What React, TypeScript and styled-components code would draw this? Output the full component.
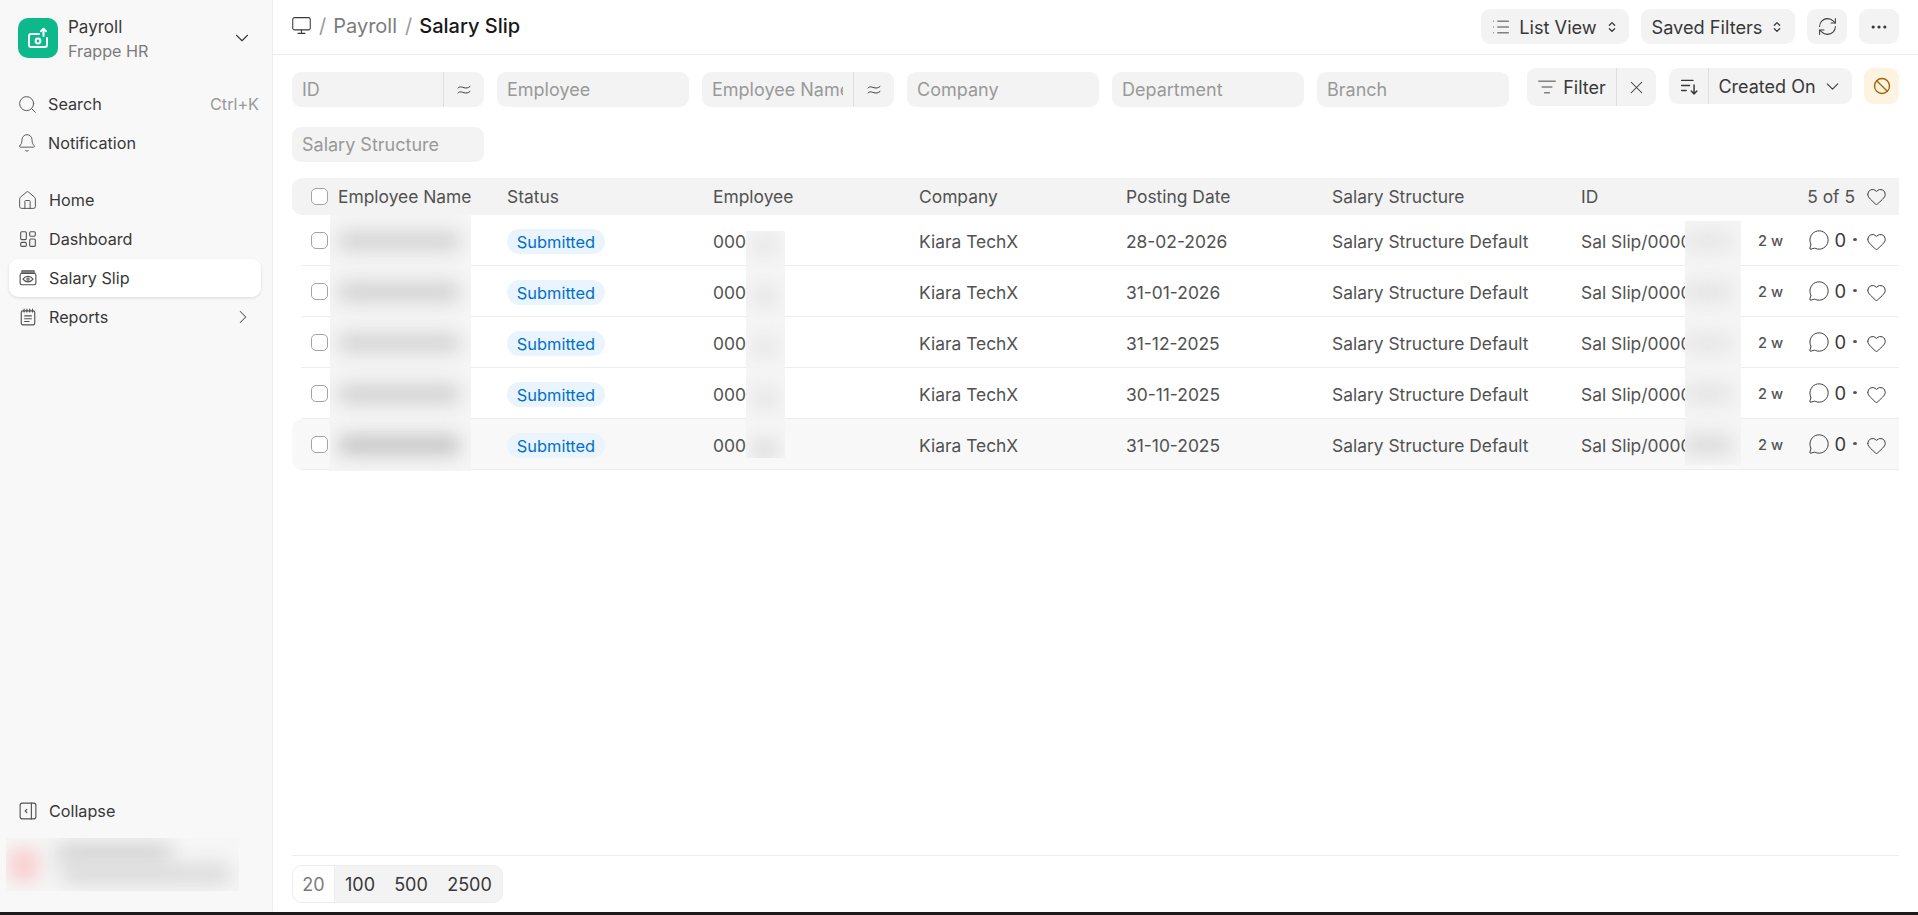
import React from 'react';
import styled, { createGlobalStyle } from 'styled-components';
import {
  Search, Bell, House, ChevronDown, ChevronRight, Monitor, List, RefreshCw,
  Ellipsis, ListFilter, X, Ban, MessageCircle, Heart,
} from 'lucide-react';

const GlobalStyle = createGlobalStyle`
  html, body { margin: 0; padding: 0; height: 100%; background: #fff; }
  body { font-family: "Inter", "Liberation Sans", sans-serif; font-size: 16px; color: #525252; overflow: hidden; }
  #root { height: 100%; }
`;

const Page = styled.div`
  height: 915px;
  display: flex;
  flex-direction: column;
`;
const Desk = styled.div`
  flex: 1;
  display: flex;
  min-height: 0;
`;
const BottomStrip = styled.div`
  height: 3px;
  background: #1e1a1b;
`;

/* sidebar */
const Sidebar = styled.aside`
  flex: none;
  box-sizing: border-box;
  background: #f8f8f8;
  border-right: 1px solid #ededed;
  width: 273px;
  display: flex;
  flex-direction: column;
  padding: 18px 11px 21px 9px;
`;
const Brand = styled.div`
  display: flex;
  align-items: center;
  padding-left: 9px;
  height: 40px;
`;
const Logo = styled.div`
  width: 40px;
  height: 40px;
  border-radius: 10px;
  background: #0db88b;
  display: flex;
  align-items: center;
  justify-content: center;
  flex: none;
`;
const BrandText = styled.div`
  flex: 1;
  margin-left: 10px;
  display: flex;
  flex-direction: column;
  gap: 4px;
  padding-top: 1px;
`;
const BrandTitle = styled.div`
  font-size: 17px;
  line-height: 20px;
  color: #383838;
`;
const BrandSub = styled.div`
  font-size: 16.2px;
  line-height: 20px;
  color: #7c7c7c;
`;
const BrandChevron = styled(ChevronDown)`
  margin-right: 8px;
  color: #383838;
`;
const NavGroup = styled.nav<{ $top: number }>`
  display: flex;
  flex-direction: column;
  gap: 1px;
  margin-top: ${(p) => p.$top}px;
`;
const NavItem = styled.div<{ $active?: boolean }>`
  height: 38px;
  box-sizing: border-box;
  display: flex;
  align-items: center;
  padding: 0 10px;
  border-radius: 9px;
  font-size: 16.2px;
  color: #383838;
  background: ${(p) => (p.$active ? '#fff' : 'transparent')};
  box-shadow: ${(p) => (p.$active ? '0 1px 3px rgba(0,0,0,0.12)' : 'none')};
`;
const IconSlot = styled.span<{ $w: number; $shift: number }>`
  flex: none;
  width: ${(p) => p.$w}px;
  display: flex;
  align-items: center;
  color: #525252;
  svg { margin-left: ${(p) => p.$shift}px; flex: none; }
`;
const NavLabel = styled.span`
  flex: 1;
`;
const Shortcut = styled.span`
  font-size: 16.2px;
  color: #999;
  margin-right: -8px;
`;
const SideChevron = styled(ChevronRight)`
  color: #525252;
  margin-right: -3px;
`;
const SideFoot = styled.div`
  margin-top: auto;
  display: flex;
  flex-direction: column;
  gap: 8px;
`;
const UserBlur = styled.div`
  height: 53px;
  margin: 0 22px 0 -3px;
  background: #f6f6f6;
  position: relative;
  overflow: hidden;
`;
const UserAvatar = styled.div`
  position: absolute;
  left: 2px;
  top: 10px;
  width: 32px;
  height: 34px;
  background: #f8d3d3;
  border-radius: 8px;
  filter: blur(8px);
`;
const UserLine = styled.div<{ $left: number; $top: number; $w: number; $tone: string }>`
  position: absolute;
  left: ${(p) => p.$left}px;
  top: ${(p) => p.$top}px;
  width: ${(p) => p.$w}px;
  height: 18px;
  border-radius: 6px;
  background: ${(p) => p.$tone};
  filter: blur(10px);
`;

/* main */
const Main = styled.main`
  flex: 1;
  min-width: 0;
  display: flex;
  flex-direction: column;
`;
const Topbar = styled.header`
  height: 55px;
  box-sizing: border-box;
  border-bottom: 1px solid #ededed;
  display: flex;
  align-items: flex-start;
  justify-content: space-between;
  padding: 9px 19px 0 19px;
`;
const Crumbs = styled.div`
  display: flex;
  align-items: center;
  height: 35px;
  margin-top: -1px;
  font-size: 20px;
  color: #7c7c7c;
  svg { color: #383838; margin: 0 7px 0 -1px; }
`;
const Sep = styled.span`
  color: #999;
  margin: 0 7px 0 0;
`;
const CrumbLink = styled.span`
  margin-right: 8px;
`;
const CrumbCurrent = styled.span`
  color: #171717;
  font-weight: 450;
`;
const Actions = styled.div`
  display: flex;
  gap: 12px;
`;
const Button = styled.button<{ $w: number }>`
  height: 35px;
  width: ${(p) => p.$w}px;
  box-sizing: border-box;
  border: none;
  border-radius: 9px;
  background: #f3f3f3;
  color: #383838;
  font: 400 18.2px "Inter", "Liberation Sans", sans-serif;
  display: flex;
  align-items: center;
  justify-content: center;
  gap: 8px;
  padding: 0;
`;

const Content = styled.div`
  flex: 1;
  display: flex;
  flex-direction: column;
  padding: 0 19px 9px 19px;
  min-height: 0;
`;
const FilterSection = styled.section`
  display: flex;
  align-items: flex-start;
  gap: 18px;
  padding-top: 13px;
  margin-bottom: 16px;
`;
const FilterFields = styled.div`
  display: grid;
  grid-template-columns: repeat(6, 192px);
  gap: 20px 13px;
  margin-top: 4px;
`;
const Field = styled.div`
  height: 35px;
  border-radius: 9px;
  background: #f3f3f3;
  display: flex;
  align-items: center;
  overflow: hidden;
  color: #999;
  font-size: 18px;
`;
const FieldLabel = styled.span`
  flex: 1;
  min-width: 0;
  margin: 0 10px;
  white-space: nowrap;
  overflow: hidden;
`;
const FieldFit = styled.span`
  flex: none;
  width: 41px;
  height: 100%;
  border-left: 1px solid #dedede;
  box-sizing: border-box;
  display: flex;
  align-items: center;
  justify-content: center;
  color: #383838;
`;
const FilterTools = styled.div`
  display: flex;
  gap: 13px;
`;
const SplitButton = styled.div<{ $h: number }>`
  height: ${(p) => p.$h}px;
  border-radius: 9px;
  background: #f3f3f3;
  display: flex;
  align-items: center;
  color: #383838;
  font-size: 18px;
`;
const SplitPart = styled.div<{ $w: number; $divider?: boolean }>`
  width: ${(p) => p.$w}px;
  height: 100%;
  box-sizing: border-box;
  border-left: ${(p) => (p.$divider ? '1px solid #dedede' : 'none')};
  display: flex;
  align-items: center;
  justify-content: center;
  gap: 6px;
`;
const WarnButton = styled.div`
  width: 35px;
  height: 36px;
  margin-left: -1px;
  border-radius: 9px;
  background: #fdf3e1;
  color: #a66200;
  display: flex;
  align-items: center;
  justify-content: center;
`;

/* table */
const Table = styled.div`
  position: relative;
`;
const columns = '27px 169px 206px 206px 207px 206px 249px 168px 1fr';
const HeadRow = styled.div`
  height: 37px;
  display: grid;
  grid-template-columns: ${columns};
  align-items: center;
  padding-left: 19px;
  background: #f3f3f3;
  border-radius: 10px 0 0 10px;
  color: #525252;
  font-size: 17.4px;
`;
const Row = styled.div<{ $hover?: boolean }>`
  position: relative;
  height: 51px;
  box-sizing: border-box;
  display: grid;
  grid-template-columns: ${columns};
  align-items: center;
  padding-left: 19px;
  font-size: 17.4px;
  color: #525252;
  background: ${(p) => (p.$hover ? '#f8f8f8' : 'transparent')};
  border-radius: ${(p) => (p.$hover ? '10px 0 0 10px' : '0')};
  &::after {
    content: '';
    position: absolute;
    left: 9px;
    right: 0;
    bottom: 0;
    height: 1px;
    background: #ededed;
  }
`;
const Check = styled.span`
  display: block;
  width: 17px;
  height: 17px;
  box-sizing: border-box;
  border: 1px solid #a3a3a3;
  border-radius: 5px;
  background: #fff;
`;
const Pill = styled.span`
  display: inline-flex;
  align-items: center;
  justify-content: center;
  width: 98px;
  height: 25px;
  border-radius: 13px;
  background: #eaf4fd;
  color: #0070cc;
  font-size: 16.4px;
`;
const Cell = styled.span`
  white-space: nowrap;
`;
const RowCell = styled(Cell)`
  padding-top: 2px;
`;
const PillCell = styled.span`
  display: flex;
  padding-top: 2px;
`;
const Meta = styled.div`
  display: flex;
  align-items: center;
  justify-content: flex-end;
  padding-right: 12px;
  color: #383838;
  svg { color: #383838; flex: none; }
`;
const Ago = styled.span`
  font-size: 14.6px;
  font-weight: 500;
  color: #525252;
  margin-right: auto;
  margin-left: 9px;
`;
const Comment = styled(MessageCircle)`
  margin-top: -2px;
`;
const Count = styled.span`
  margin: -2px 7px 0 4px;
  font-size: 18.4px;
`;
const Dot = styled.span`
  width: 4px;
  height: 3px;
  margin: -3px 9px 0 0;
  border-radius: 50%;
  background: #525252;
`;
const RowHeart = styled(Heart)`
  margin-top: 2px;
`;
const RowCount = styled.span`
  margin-right: 11px;
  color: #525252;
`;
const Redacted = styled.div<{ $left: number; $top: number; $w: number; $h: number }>`
  position: absolute;
  left: ${(p) => p.$left}px;
  top: ${(p) => p.$top}px;
  width: ${(p) => p.$w}px;
  height: ${(p) => p.$h}px;
  background: #f5f5f5;
  overflow: hidden;
`;
const Smear = styled.div<{ $top: number; $x: number; $w: number; $tone: string }>`
  position: absolute;
  top: ${(p) => p.$top}px;
  left: ${(p) => p.$x}px;
  width: ${(p) => p.$w}px;
  height: 20px;
  border-radius: 8px;
  background: ${(p) => p.$tone};
  filter: blur(9px);
`;

/* footer */
const ListFooter = styled.footer`
  margin-top: auto;
  border-top: 1px solid #ededed;
  padding-top: 9px;
`;
const PageSizes = styled.div`
  display: inline-flex;
  height: 38px;
  box-sizing: border-box;
  border: 1px solid #ededed;
  border-radius: 10px;
  background: #f3f3f3;
  overflow: hidden;
  color: #383838;
  font-size: 18px;
`;
const PageSize = styled.div<{ $active?: boolean; $w: number }>`
  width: ${(p) => p.$w}px;
  display: flex;
  align-items: center;
  justify-content: center;
  background: ${(p) => (p.$active ? '#fff' : 'transparent')};
  color: ${(p) => (p.$active ? '#7c7c7c' : '#383838')};
  border-right: ${(p) => (p.$active ? '1px solid #ededed' : 'none')};
  box-sizing: border-box;
`;

/* drawings */
const Svg = ({ size = 16, children }: { size?: number; children: React.ReactNode }) => (
  <svg width={size} height={size} viewBox="0 0 16 16" fill="none" stroke="currentColor" strokeWidth={1} strokeLinecap="round" strokeLinejoin="round">
    {children}
  </svg>
);
const LogoIcon = () => (
  <svg width="24" height="24" viewBox="0 0 24 24" fill="none" stroke="#fff" strokeWidth={2} strokeLinecap="round" strokeLinejoin="round">
    <path d="M13 8H5a2 2 0 0 0-2 2v9a2 2 0 0 0 2 2h14a2 2 0 0 0 2-2v-7" />
    <circle cx="12" cy="15" r="2.4" />
    <path d="M17.5 10V3M15 5.2l2.5-2.5L20 5.2" />
  </svg>
);
const DashboardIcon = () => (
  <Svg size={18}>
    <rect x="1.5" y="1.5" width="5" height="7" rx="1" />
    <rect x="9.5" y="1.5" width="5" height="4" rx="1" />
    <rect x="1.5" y="11" width="5" height="3.5" rx="1" />
    <rect x="9.5" y="8" width="5" height="6.5" rx="1" />
  </Svg>
);
const SlipIcon = () => (
  <Svg size={18}>
    <rect x="1" y="4" width="14" height="10" rx="1.5" />
    <path d="M2.5 1.5h11M2 2.8h12" />
    <path d="M3.5 9S5.3 6.6 8 6.6 12.5 9 12.5 9 10.7 11.4 8 11.4 3.5 9 3.5 9Z" />
    <circle cx="8" cy="9" r="1" />
  </Svg>
);
const ReportIcon = () => (
  <Svg size={18}>
    <rect x="2" y="2.5" width="12" height="12.5" rx="1.5" />
    <path d="M4.5 1v2.5M7 1v2.5M9.5 1v2.5M12 1v2.5M5 7h6M5 9.5h6M5 12h4" />
  </Svg>
);
const CollapseIcon = () => (
  <Svg size={18}>
    <rect x="1" y="1" width="14" height="14" rx="2" />
    <path d="M11 1v14M7 6.5 5.5 8 7 9.5" />
  </Svg>
);
const Updown = () => (
  <Svg size={14}>
    <path d="M5 6l3-3 3 3M5 10l3 3 3-3" strokeWidth={1.5} />
  </Svg>
);
const FitIcon = () => (
  <Svg size={16}>
    <path d="M2 6c2-2 3.5-1 6-.3S12 6 14 4.5M2 11c2-2 3.5-1 6-.3s4 .3 6-1.2" />
  </Svg>
);
const SortIcon = () => (
  <Svg size={18}>
    <path d="M1.5 3h10M1.5 7.5h7M1.5 12h4M12.5 7v7.5M10 12.5l2.5 2.5 2.5-2.5" strokeWidth={1.3} />
  </Svg>
);

const filters: { label: string; fit?: boolean }[] = [
  { label: 'ID', fit: true },
  { label: 'Employee' },
  { label: 'Employee Name', fit: true },
  { label: 'Company' },
  { label: 'Department' },
  { label: 'Branch' },
  { label: 'Salary Structure' },
];
const dates = ['28-02-2026', '31-01-2026', '31-12-2025', '30-11-2025', '31-10-2025'];
const tones = ['#d4d4d4', '#d2d2d2', '#d4d4d4', '#d2d2d2', '#c6c6c6'];
const softTones = ['#e6e6e6', '#e4e4e4', '#e6e6e6', '#e4e4e4', '#dcdcdc'];

function App() {
  return (
    <Page>
      <GlobalStyle />
      <Desk>
        <Sidebar>
          <Brand>
            <Logo><LogoIcon /></Logo>
            <BrandText>
              <BrandTitle>Payroll</BrandTitle>
              <BrandSub>Frappe HR</BrandSub>
            </BrandText>
            <BrandChevron size={22} strokeWidth={1.2} />
          </Brand>
          <NavGroup $top={27}>
            <NavItem>
              <IconSlot $w={29} $shift={-2}><Search size={21} strokeWidth={1.1} /></IconSlot>
              <NavLabel>Search</NavLabel>
              <Shortcut>Ctrl+K</Shortcut>
            </NavItem>
            <NavItem>
              <IconSlot $w={29} $shift={-2}><Bell size={20} strokeWidth={1.1} /></IconSlot>
              <NavLabel>Notification</NavLabel>
            </NavItem>
          </NavGroup>
          <NavGroup $top={19}>
            <NavItem>
              <IconSlot $w={30} $shift={-2}><House size={21} strokeWidth={1.1} /></IconSlot>
              <NavLabel>Home</NavLabel>
            </NavItem>
            <NavItem>
              <IconSlot $w={30} $shift={0}><DashboardIcon /></IconSlot>
              <NavLabel>Dashboard</NavLabel>
            </NavItem>
            <NavItem $active>
              <IconSlot $w={30} $shift={0}><SlipIcon /></IconSlot>
              <NavLabel>Salary Slip</NavLabel>
            </NavItem>
            <NavItem>
              <IconSlot $w={30} $shift={0}><ReportIcon /></IconSlot>
              <NavLabel>Reports</NavLabel>
              <SideChevron size={22} strokeWidth={1.1} />
            </NavItem>
          </NavGroup>
          <SideFoot>
            <NavItem>
              <IconSlot $w={30} $shift={0}><CollapseIcon /></IconSlot>
              <NavLabel>Collapse</NavLabel>
            </NavItem>
            <UserBlur>
              <UserAvatar />
              <UserLine $left={50} $top={6} $w={115} $tone="#cfcfcf" />
              <UserLine $left={55} $top={27} $w={170} $tone="#d6d6d6" />
            </UserBlur>
          </SideFoot>
        </Sidebar>
        <Main>
          <Topbar>
            <Crumbs>
              <Monitor size={21} strokeWidth={1.2} />
              <Sep>/</Sep>
              <CrumbLink>Payroll</CrumbLink>
              <Sep>/</Sep>
              <CrumbCurrent>Salary Slip</CrumbCurrent>
            </Crumbs>
            <Actions>
              <Button $w={148}><List size={20} strokeWidth={1.1} />List View<Updown /></Button>
              <Button $w={154}>Saved Filters<Updown /></Button>
              <Button $w={40}><RefreshCw size={21} strokeWidth={1.15} /></Button>
              <Button $w={40}><Ellipsis size={20} strokeWidth={1.8} /></Button>
            </Actions>
          </Topbar>
          <Content>
            <FilterSection>
              <FilterFields>
                {filters.map((f) => (
                  <Field key={f.label}>
                    <FieldLabel>{f.label}</FieldLabel>
                    {f.fit && <FieldFit><FitIcon /></FieldFit>}
                  </Field>
                ))}
              </FilterFields>
              <FilterTools>
                <SplitButton $h={38}>
                  <SplitPart $w={89}><ListFilter size={20} strokeWidth={1.1} />Filter</SplitPart>
                  <SplitPart $w={40} $divider><X size={21} strokeWidth={1.15} /></SplitPart>
                </SplitButton>
                <SplitButton $h={36}>
                  <SplitPart $w={39}><SortIcon /></SplitPart>
                  <SplitPart $w={144} $divider>Created On<ChevronDown size={21} strokeWidth={1.2} /></SplitPart>
                </SplitButton>
                <WarnButton><Ban size={18} strokeWidth={1.8} /></WarnButton>
              </FilterTools>
            </FilterSection>
            <Table>
              <HeadRow>
                <Check />
                <Cell>Employee Name</Cell>
                <Cell>Status</Cell>
                <Cell>Employee</Cell>
                <Cell>Company</Cell>
                <Cell>Posting Date</Cell>
                <Cell>Salary Structure</Cell>
                <Cell>ID</Cell>
                <Meta>
                  <RowCount>5 of 5</RowCount>
                  <Heart size={21} strokeWidth={1.1} />
                </Meta>
              </HeadRow>
              {dates.map((d, i) => (
                <Row key={d} $hover={i === 4}>
                  <Check />
                  <span />
                  <PillCell><Pill>Submitted</Pill></PillCell>
                  <RowCell>000</RowCell>
                  <RowCell>Kiara TechX</RowCell>
                  <RowCell>{d}</RowCell>
                  <RowCell>Salary Structure Default</RowCell>
                  <RowCell>Sal Slip/0000</RowCell>
                  <Meta>
                    <Ago>2 w</Ago>
                    <Comment size={22} strokeWidth={1.05} />
                    <Count>0</Count>
                    <Dot />
                    <RowHeart size={21} strokeWidth={1.1} />
                  </Meta>
                </Row>
              ))}
              <Redacted $left={38} $top={37} $w={141} $h={256}>
                {tones.map((t, i) => (
                  <Smear key={i} $top={16 + i * 51} $x={8} $w={122} $tone={t} />
                ))}
              </Redacted>
              <Redacted $left={454} $top={53} $w={39} $h={227}>
                {softTones.map((t, i) => (
                  <Smear key={i} $top={4 + i * 51} $x={6} $w={26} $tone={t} />
                ))}
              </Redacted>
              <Redacted $left={1393} $top={43} $w={56} $h={244}>
                {softTones.map((t, i) => (
                  <Smear key={i} $top={10 + i * 51} $x={-2} $w={50} $tone={t} />
                ))}
              </Redacted>
            </Table>
            <ListFooter>
              <PageSizes>
                <PageSize $active $w={42}>20</PageSize>
                <PageSize $w={50}>100</PageSize>
                <PageSize $w={52}>500</PageSize>
                <PageSize $w={65}>2500</PageSize>
              </PageSizes>
            </ListFooter>
          </Content>
        </Main>
      </Desk>
      <BottomStrip />
    </Page>
  );
}

export default App;
